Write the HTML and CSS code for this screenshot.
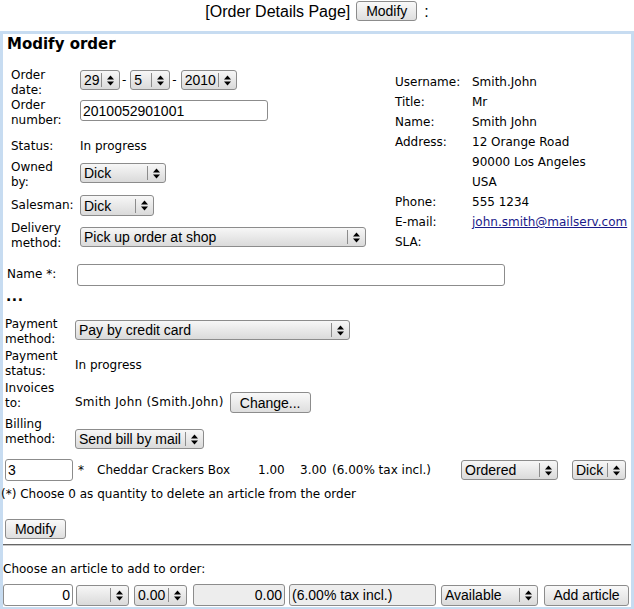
FILE: index.html
```html
<!DOCTYPE html>
<html>
<head>
<meta charset="utf-8">
<title>Modify order</title>
<link rel="stylesheet" href="styles.css">
</head>
<body>
<div class="topbar">
  <span class="crumb">[Order Details Page]</span>
  <button class="btn b-head">Modify</button>
  <span class="colon">:</span>
</div>

<div class="box">
  <h1 class="title">Modify order</h1>

  <div class="top">
    <div class="left">
      <div class="row r1">
        <div class="lbl">Order date:</div>
        <div class="ctl date">
          <span class="sel s-day"><span class="txt">29</span><span class="arr"><svg width="7" height="11" viewBox="0 0 7 11"><polygon points="0,4.5 3.5,0.5 7,4.5"/><polygon points="0,6.5 3.5,10.5 7,6.5"/></svg></span></span>
          <span class="dash">-</span>
          <span class="sel s-mon"><span class="txt">5</span><span class="arr"><svg width="7" height="11" viewBox="0 0 7 11"><polygon points="0,4.5 3.5,0.5 7,4.5"/><polygon points="0,6.5 3.5,10.5 7,6.5"/></svg></span></span>
          <span class="dash">-</span>
          <span class="sel s-year"><span class="txt">2010</span><span class="arr"><svg width="7" height="11" viewBox="0 0 7 11"><polygon points="0,4.5 3.5,0.5 7,4.5"/><polygon points="0,6.5 3.5,10.5 7,6.5"/></svg></span></span>
        </div>
      </div>
      <div class="row r2">
        <div class="lbl">Order number:</div>
        <div class="ctl"><span class="inp i-num">2010052901001</span></div>
      </div>
      <div class="row r3">
        <div class="lbl">Status:</div>
        <div class="ctl val">In progress</div>
      </div>
      <div class="row r4">
        <div class="lbl">Owned by:</div>
        <div class="ctl"><span class="sel s-owner"><span class="txt">Dick</span><span class="arr"><svg width="7" height="11" viewBox="0 0 7 11"><polygon points="0,4.5 3.5,0.5 7,4.5"/><polygon points="0,6.5 3.5,10.5 7,6.5"/></svg></span></span></div>
      </div>
      <div class="row r5">
        <div class="lbl lbl-inline">Salesman:</div>
        <div class="ctl"><span class="sel s-sales"><span class="txt">Dick</span><span class="arr"><svg width="7" height="11" viewBox="0 0 7 11"><polygon points="0,4.5 3.5,0.5 7,4.5"/><polygon points="0,6.5 3.5,10.5 7,6.5"/></svg></span></span></div>
      </div>
      <div class="row r6">
        <div class="lbl">Delivery method:</div>
        <div class="ctl"><span class="sel s-deliv"><span class="txt">Pick up order at shop</span><span class="arr"><svg width="7" height="11" viewBox="0 0 7 11"><polygon points="0,4.5 3.5,0.5 7,4.5"/><polygon points="0,6.5 3.5,10.5 7,6.5"/></svg></span></span></div>
      </div>
    </div>

    <div class="right">
      <div class="info"><span class="k">Username:</span><span class="v">Smith.John</span></div>
      <div class="info"><span class="k">Title:</span><span class="v">Mr</span></div>
      <div class="info"><span class="k">Name:</span><span class="v">Smith John</span></div>
      <div class="info"><span class="k">Address:</span><span class="v">12 Orange Road<br>90000 Los Angeles<br>USA</span></div>
      <div class="info"><span class="k">Phone:</span><span class="v">555 1234</span></div>
      <div class="info"><span class="k">E-mail:</span><span class="v"><a class="mail" href="#">john.smith@mailserv.com</a></span></div>
      <div class="info"><span class="k">SLA:</span><span class="v"></span></div>
    </div>
  </div>

  <div class="row name-row">
    <div class="lbl">Name *:</div>
    <div class="ctl"><span class="inp i-name"></span></div>
  </div>

  <div class="dots">...</div>

  <div class="row lrow pm">
    <div class="lbl">Payment method:</div>
    <div class="ctl"><span class="sel s-pay"><span class="txt">Pay by credit card</span><span class="arr"><svg width="7" height="11" viewBox="0 0 7 11"><polygon points="0,4.5 3.5,0.5 7,4.5"/><polygon points="0,6.5 3.5,10.5 7,6.5"/></svg></span></span></div>
  </div>
  <div class="row lrow ps">
    <div class="lbl">Payment status:</div>
    <div class="ctl val">In progress</div>
  </div>
  <div class="row lrow inv">
    <div class="lbl">Invoices to:</div>
    <div class="ctl invctl"><span class="val">Smith John (Smith.John)</span><button class="btn b-change">Change...</button></div>
  </div>
  <div class="row lrow bill">
    <div class="lbl">Billing method:</div>
    <div class="ctl"><span class="sel s-bill"><span class="txt">Send bill by mail</span><span class="arr"><svg width="7" height="11" viewBox="0 0 7 11"><polygon points="0,4.5 3.5,0.5 7,4.5"/><polygon points="0,6.5 3.5,10.5 7,6.5"/></svg></span></span></div>
  </div>

  <div class="article">
    <span class="inp i-qty">3</span>
    <span class="c-star">*</span>
    <span class="c-name">Cheddar Crackers Box</span>
    <span class="c-unit">1.00</span>
    <span class="c-total">3.00</span>
    <span class="c-tax">(6.00% tax incl.)</span>
    <span class="sel s-state"><span class="txt">Ordered</span><span class="arr"><svg width="7" height="11" viewBox="0 0 7 11"><polygon points="0,4.5 3.5,0.5 7,4.5"/><polygon points="0,6.5 3.5,10.5 7,6.5"/></svg></span></span>
    <span class="sel s-who"><span class="txt">Dick</span><span class="arr"><svg width="7" height="11" viewBox="0 0 7 11"><polygon points="0,4.5 3.5,0.5 7,4.5"/><polygon points="0,6.5 3.5,10.5 7,6.5"/></svg></span></span>
  </div>

  <p class="note">(*) Choose 0 as quantity to delete an article from the order</p>

  <div class="modrow"><button class="btn b-mod">Modify</button></div>

  <hr class="sep">

  <p class="choose">Choose an article to add to order:</p>

  <div class="addrow">
    <span class="inp i-q0 ralign">0</span>
    <span class="sel s-art"><span class="txt"></span><span class="arr"><svg width="7" height="11" viewBox="0 0 7 11"><polygon points="0,4.5 3.5,0.5 7,4.5"/><polygon points="0,6.5 3.5,10.5 7,6.5"/></svg></span></span>
    <span class="sel s-price"><span class="txt">0.00</span><span class="arr"><svg width="7" height="11" viewBox="0 0 7 11"><polygon points="0,4.5 3.5,0.5 7,4.5"/><polygon points="0,6.5 3.5,10.5 7,6.5"/></svg></span></span>
    <span class="inp i-tot ralign ro">0.00</span>
    <span class="inp i-tax ro">(6.00% tax incl.)</span>
    <span class="sel s-avail"><span class="txt">Available</span><span class="arr"><svg width="7" height="11" viewBox="0 0 7 11"><polygon points="0,4.5 3.5,0.5 7,4.5"/><polygon points="0,6.5 3.5,10.5 7,6.5"/></svg></span></span>
    <button class="btn b-add">Add article</button>
  </div>
</div>
</body>
</html>
```

FILE: styles.css
```css
* { box-sizing: border-box; }

html, body {
  margin: 0;
  padding: 0;
  background: #fff;
  color: #000;
  font-family: "DejaVu Sans", Verdana, sans-serif;
  font-size: 12px;
  line-height: 15px;
  overflow: hidden;
}

/* header line */
.topbar {
  display: flex;
  justify-content: center;
  align-items: center;
  height: 22px;
  margin-bottom: 9px;
  font-family: "Liberation Sans", Arial, sans-serif;
  font-size: 16px;
}
.crumb { margin-right: 6px; }
.colon { margin-left: 7px; }

/* controls */
.btn {
  flex: none;
  display: inline-flex;
  align-items: center;
  justify-content: center;
  height: 20px;
  padding: 0 4px;
  margin: 0;
  border: 1px solid #8c8c8c;
  border-radius: 3px;
  background: linear-gradient(#f9f9f9, #dedede);
  font-family: "Liberation Sans", Arial, sans-serif;
  font-size: 14px;
  color: #000;
  line-height: 16px;
  white-space: nowrap;
}
.b-head { width: 61px; }
.b-change { width: 81px; height: 21px; }
.b-mod { width: 61px; }
.b-add { width: 85px; height: 21px; }

.sel {
  flex: none;
  display: inline-flex;
  align-items: center;
  height: 20px;
  border: 1px solid #8c8c8c;
  border-radius: 3px;
  background: linear-gradient(#f7f7f7, #dadada);
  font-family: "Liberation Sans", Arial, sans-serif;
  font-size: 14px;
  line-height: 16px;
  padding-left: 3px;
  overflow: hidden;
  white-space: nowrap;
  vertical-align: top;
}
.sel .txt { flex: 1; min-width: 0; overflow: hidden; }
.sel .arr {
  flex: none;
  width: 18px;
  height: 14px;
  border-left: 1px solid #8c8c8c;
  display: flex;
  align-items: center;
  justify-content: center;
}
.sel .arr svg { display: block; fill: #000; }

.inp {
  flex: none;
  display: inline-flex;
  align-items: center;
  height: 21px;
  border: 1px solid #8c8c8c;
  border-radius: 3px;
  background: #fff;
  padding: 0 2px;
  font-family: "Liberation Sans", Arial, sans-serif;
  font-size: 14px;
  line-height: 16px;
  white-space: nowrap;
  overflow: hidden;
  vertical-align: top;
}
.inp.ralign { justify-content: flex-end; }
.inp.ro { background: #ededed; }

/* box */
.box {
  width: 634px;
  border: 3px solid #c7dcf1;
  padding: 0 0 1px 0;
}
.title {
  margin: 1px 0 0 4px;
  font-size: 15px;
  line-height: 18px;
  font-weight: bold;
}

.top { display: flex; }
.left {
  width: 392px;
  flex: none;
  padding: 13px 0 0 8px;
}
.right {
  flex: 1;
  padding-top: 19px;
  line-height: 20px;
}

.row { display: flex; align-items: flex-start; }
.lbl { width: 58px; flex: none; }
.left .ctl { margin-left: 11px; flex: none; }

.r1 { height: 32px; }
.r1 .lbl { margin-top: 2px; }
.r1 .ctl { margin-top: 4px; }
.date { display: flex; align-items: center; }
.dash { flex: none; margin: 0 2px; }
.s-day { width: 40px; }
.s-mon { width: 40px; margin-left: 2px; }
.s-year { width: 56px; margin-left: 2px; }

.r2 { height: 41px; }
.r2 .ctl { margin-top: 2px; }
.i-num { width: 188px; }

.r3 { height: 21px; }

.r4 { height: 34px; }
.r4 .ctl { margin-top: 3px; }
.s-owner { width: 86px; }

.r5 { height: 27px; }
.r5 .lbl { margin-top: 4px; }
.r5 .ctl { margin-top: 1px; }
.s-sales { width: 74px; height: 21px; }

.r6 { height: 31px; }
.r6 .ctl { margin-top: 6px; }
.s-deliv { width: 286px; }

.info { display: flex; }
.info .k { width: 77px; flex: none; }
.mail { color: #1a1a8a; text-decoration: underline; }

/* lower part */
.name-row { margin-top: 12px; padding-left: 4px; height: 22px; }
.name-row .lbl { margin-top: 3px; }
.name-row .ctl { margin-left: 12px; }
.i-name { width: 428px; height: 22px; }

.dots {
  margin: 1px 0 0 3px;
  font-weight: bold;
  font-size: 14px;
  line-height: 18px;
  letter-spacing: 0.5px;
}

.lrow { padding-left: 2px; }
.lrow .lbl { width: 62px; }
.lrow .ctl { margin-left: 8px; }

.pm { margin-top: 12px; height: 32px; }
.pm .ctl { margin-top: 3px; }
.s-pay { width: 275px; }

.ps { height: 31px; }
.ps .ctl { margin-top: 9px; }

.inv { height: 37px; }
.inv .lbl { margin-top: 1px; }
.invctl { display: flex; align-items: center; margin-top: 12px; }
.invctl .val { letter-spacing: 0.25px; }
.invctl .btn { margin-left: 6px; }

.bill { height: 42px; }
.bill .ctl { margin-top: 12px; }
.s-bill { width: 129px; }

.article {
  display: flex;
  align-items: center;
  height: 22px;
  padding-left: 2px;
}
.article > span { flex: none; }
.i-qty { width: 68px; height: 22px; }
.c-star { margin-left: 5px; width: 19px; }
.c-name { width: 161px; }
.c-unit { width: 42px; }
.c-total { width: 32px; }
.c-tax { width: 129px; white-space: nowrap; }
.s-state { width: 97px; }
.s-who { width: 54px; margin-left: 14px; }

.note { margin: 6px 0 0 -2px; }

.modrow { margin-top: 17px; padding-left: 2px; height: 20px; }

.sep {
  margin: 5px 0 0 0;
  height: 0;
  border: 0;
  border-top: 1px solid #666;
  border-bottom: 1px solid #c8c8c8;
}

.choose { margin: 16px 0 0 0; }

.addrow {
  display: flex;
  align-items: center;
  margin-top: 7px;
  height: 22px;
}
.addrow .inp { height: 22px; }
.addrow .sel { height: 21px; }
.i-q0 { width: 70px; }
.s-art { width: 53px; margin-left: 3px; }
.s-price { width: 53px; margin-left: 5px; }
.i-tot { width: 92px; margin-left: 6px; }
.i-tax { width: 147px; margin-left: 4px; }
.s-avail { width: 97px; margin-left: 5px; }
.b-add { margin-left: 6px; }
```
